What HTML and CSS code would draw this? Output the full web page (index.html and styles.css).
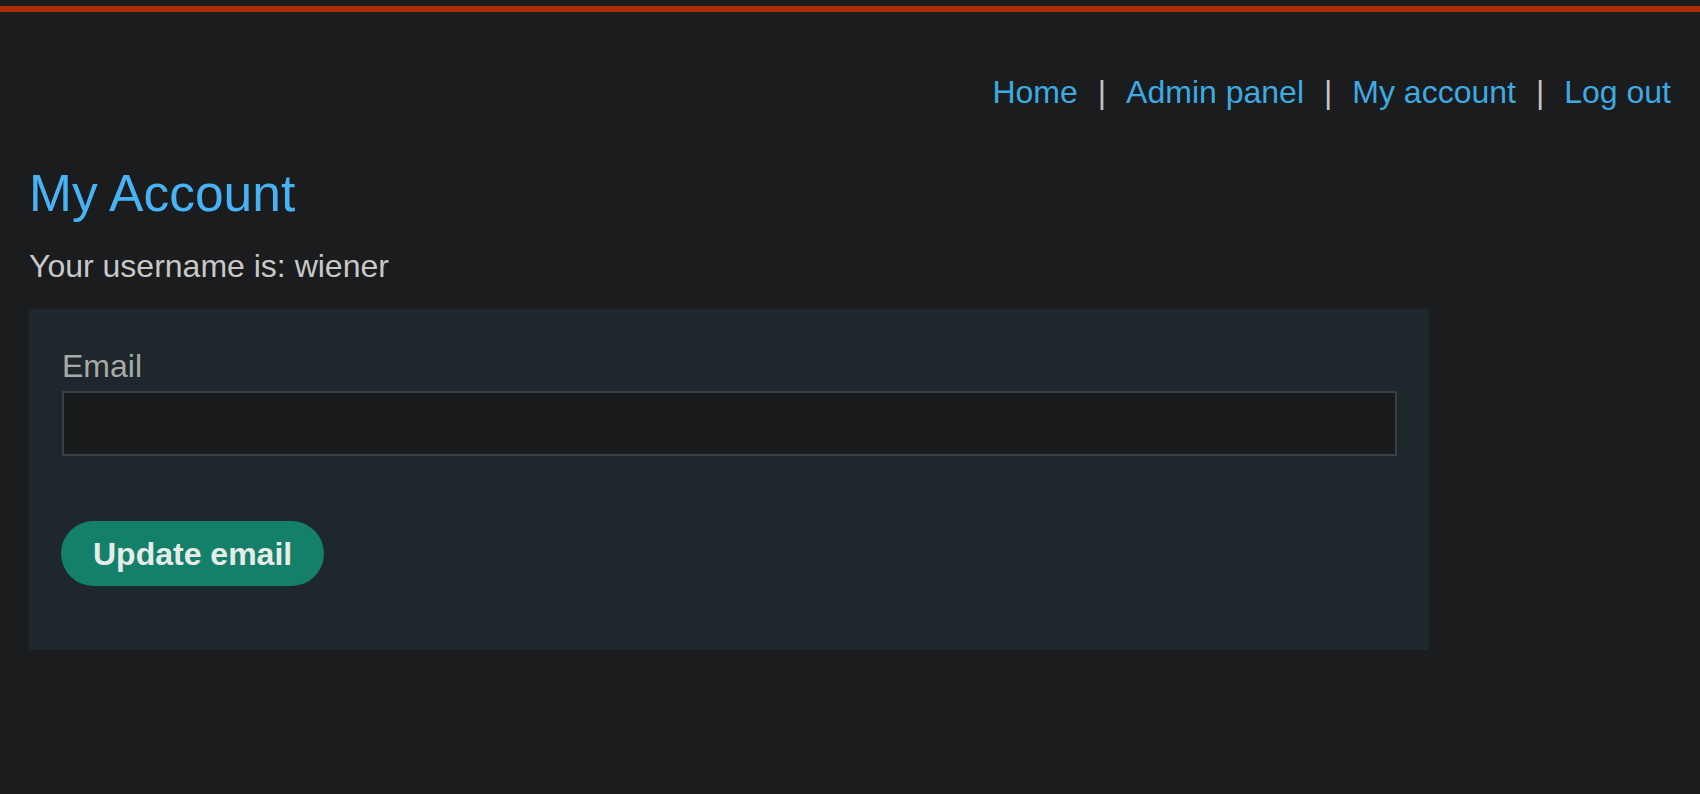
FILE: index.html
```html
<!DOCTYPE html>
<html lang="en">
<head>
<meta charset="utf-8">
<title>My Account</title>
<link rel="stylesheet" href="styles.css">
</head>
<body>
<div class="topbar"></div>
<header class="nav">
  <a class="nav-link" href="#">Home</a>
  <span class="sep">|</span>
  <a class="nav-link" href="#">Admin panel</a>
  <span class="sep">|</span>
  <a class="nav-link" href="#">My account</a>
  <span class="sep">|</span>
  <a class="nav-link" href="#">Log out</a>
</header>
<main class="content">
  <h1 class="title">My Account</h1>
  <p class="username">Your username is: wiener</p>
  <form class="panel">
    <label class="label" for="email">Email</label>
    <input class="input" id="email" type="email">
    <button class="button" type="button">Update email</button>
  </form>
</main>
</body>
</html>
```
FILE: styles.css
```css
html, body {
  margin: 0;
  padding: 0;
  background: #1a1c1e;
  font-family: "Liberation Sans", Arial, sans-serif;
}

.topbar {
  margin-top: 6px;
  height: 6px;
  background: #ae2c02;
}

.nav {
  display: flex;
  justify-content: flex-end;
  align-items: baseline;
  gap: 20px;
  margin-top: 62px;
  padding-right: 29px;
  font-size: 32px;
  line-height: 36px;
}

.nav-link {
  color: #3eaae2;
  text-decoration: none;
}

.sep {
  color: #c4c4c4;
}

.content {
  padding-left: 29px;
}

.title {
  margin: 54px 0 0 0;
  font-weight: normal;
  font-size: 51.5px;
  line-height: 58px;
  color: #47b3f4;
}

.username {
  margin: 26px 0 0 0;
  font-size: 32px;
  line-height: 36px;
  color: #c8c8c8;
}

.panel {
  box-sizing: border-box;
  width: 1400px;
  height: 341px;
  margin-top: 25px;
  padding: 39px 32px 0 33px;
  background: #1e272c;
  display: flex;
  flex-direction: column;
  align-items: flex-start;
}

.label {
  font-size: 32px;
  line-height: 36px;
  color: #a9aaa6;
}

.input {
  box-sizing: border-box;
  margin-top: 7px;
  width: 1335px;
  height: 65px;
  background: #1a1b1d;
  border: 2px solid #3a3f42;
  border-radius: 0;
  outline: none;
}

.button {
  margin-top: 65px;
  margin-left: -1px;
  height: 65px;
  padding: 0 32px;
  border: none;
  border-radius: 33px;
  background: #15806a;
  color: #e6ede8;
  font-family: "Liberation Sans", Arial, sans-serif;
  font-weight: bold;
  font-size: 32px;
  line-height: 36px;
}
```
